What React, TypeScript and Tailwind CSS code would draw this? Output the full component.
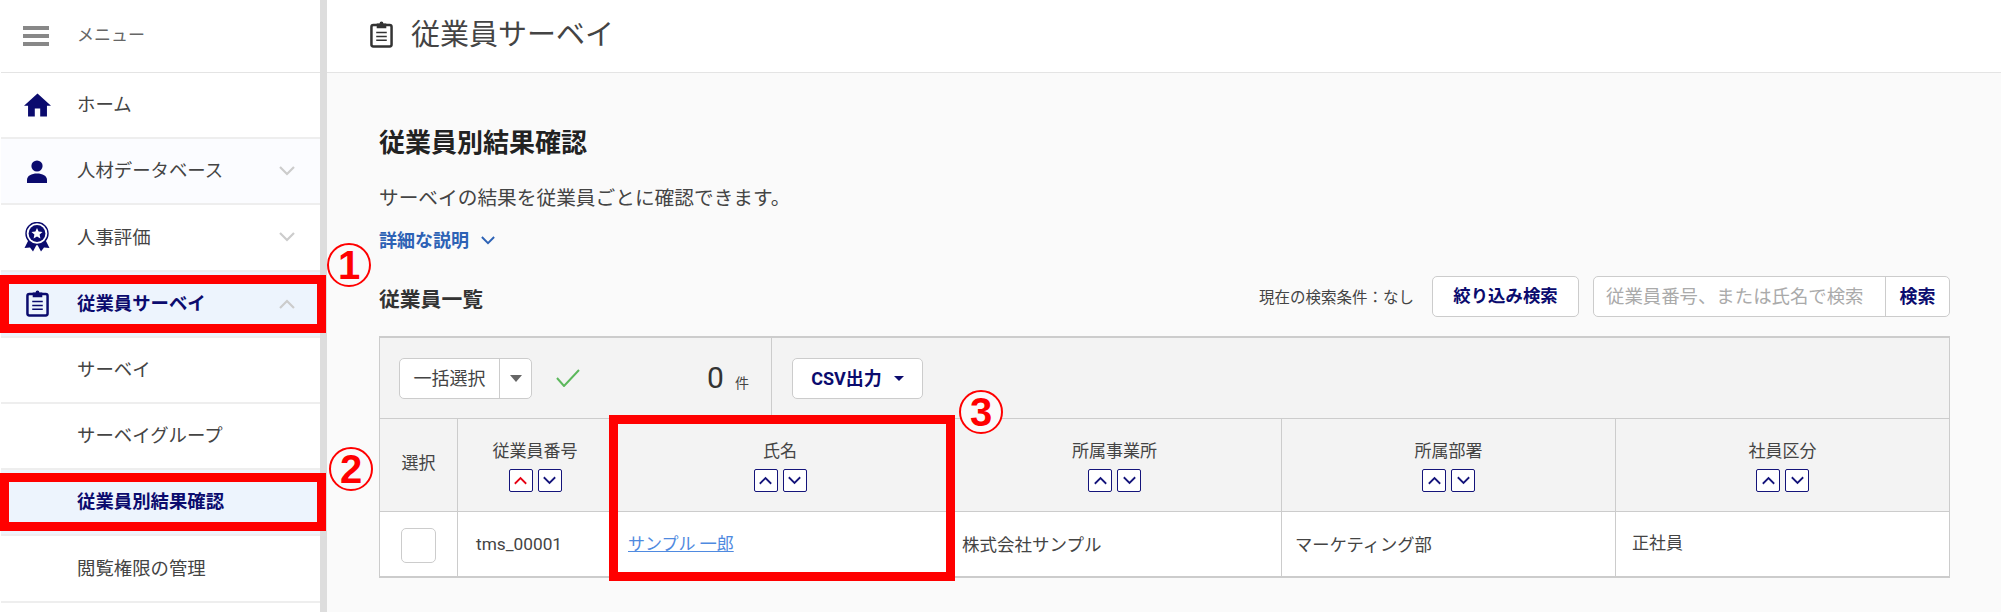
const Chevron = ({ up = false, className = "" }: { up?: boolean; className?: string }) => (
  <svg viewBox="0 0 16 10" className={className} fill="none" stroke="currentColor" strokeWidth={2.2}>
    <path d={up ? "M1 9 L8 2 L15 9" : "M1 1 L8 8 L15 1"} />
  </svg>
);

const Clipboard = ({ color }: { color: string }) => (
  <svg viewBox="0 0 24 28" className="w-[23px] h-[27px]" fill="none">
    <rect x="1.5" y="4" width="21" height="22.5" rx="2" stroke={color} strokeWidth="2.6" />
    <path d="M7 2.5h3a2 2 0 0 1 4 0h3v5H7z" fill={color} />
    <path d="M6.5 12h11M6.5 16h11M6.5 20h11" stroke={color} strokeWidth="1.6" />
  </svg>
);

const Home = () => (
  <svg viewBox="2 3 20 17" className="w-[27px] h-[24px]" fill="#0b0b6e">
    <path d="M10 20v-6h4v6h5v-8h3L12 3 2 12h3v8z" />
  </svg>
);

const Person = () => (
  <svg viewBox="0 0 20 23" className="w-[20px] h-[23px]" fill="#0b0b6e">
    <circle cx="10" cy="6" r="5.6" />
    <path d="M0 23v-3c0-4.2 4.5-6.5 10-6.5S20 15.8 20 20v3z" />
  </svg>
);

const Badge = () => (
  <svg viewBox="0 0 26 30" className="w-[26px] h-[30px]">
    <path d="M5 17 L0.5 26 L6 25.5 L9 29.5 L13 22 L17 29.5 L20 25.5 L25.5 26 L21 17z" fill="#0b0b6e" />
    <circle cx="13" cy="11.5" r="11" fill="#fff" stroke="#0b0b6e" strokeWidth="1.4" />
    <circle cx="13" cy="11.5" r="8.4" fill="#0b0b6e" />
    <path d="M13 6l1.6 3.6 3.9.4-2.9 2.6.8 3.9-3.4-2-3.4 2 .8-3.9L7.5 10l3.9-.4z" fill="#fff" />
  </svg>
);

const Row = ({
  icon,
  label,
  chevron,
  active,
  tint,
}: {
  icon?: React.ReactNode;
  label: string;
  chevron?: "up" | "down";
  active?: boolean;
  tint?: boolean;
}) => (
  <div
    className={`h-[66.2px] flex items-center border-b-2 border-[#eeeeee] text-[18.4px] ${
      active ? "bg-[#edf4fd] text-[#0b0b6e] font-bold" : tint ? "bg-[#fbfcff] text-[#444444]" : "bg-white text-[#444444]"
    }`}
  >
    <div className="w-[76px] flex justify-center pr-[4px] shrink-0">{icon}</div>
    <span className="flex-1">{label}</span>
    {chevron && <Chevron up={chevron === "up"} className="w-[16px] h-[10px] text-[#cccccc] mr-[25px]" />}
  </div>
);

const Sort = ({ redUp = false }: { redUp?: boolean }) => (
  <div className="flex justify-center gap-[5px] mt-[6px]">
    <div className="w-[24px] h-[23px] bg-white border border-[#14147a] rounded-[2px] flex items-center justify-center">
      <Chevron up className={`w-[13px] h-[9px] ${redUp ? "text-[#e60012]" : "text-[#14147a]"}`} />
    </div>
    <div className="w-[24px] h-[23px] bg-white border border-[#14147a] rounded-[2px] flex items-center justify-center">
      <Chevron className="w-[13px] h-[9px] text-[#14147a]" />
    </div>
  </div>
);

const Head = ({ label, redUp }: { label: string; redUp?: boolean }) => (
  <div className="border-r border-[#cccccc] last:border-r-0 flex flex-col justify-start items-center pt-[20px] text-[17px] leading-[24px] text-[#444444]">
    <span>{label}</span>
    <Sort redUp={redUp} />
  </div>
);

const Ring = ({ n, className }: { n: string; className: string }) => (
  <div
    className={`absolute w-[44px] h-[44px] rounded-full border-2 border-[#ff0000] bg-[#fafafa] flex items-center justify-center text-[40px] font-bold text-[#ff0000] font-['Liberation_Sans'] leading-none ${className}`}
  >
    {n}
  </div>
);

export default function App() {
  return (
    <div className="relative w-[2001px] h-[612px] overflow-hidden flex bg-[#fafafa] font-['Roboto','Noto_Sans_CJK_JP',sans-serif]">
      <aside className="w-[327px] h-[612px] shrink-0 bg-white pl-px border-r-[7px] border-[#dddddd]">
        <div className="h-[73px] flex items-center border-b border-[#e4e4e4] text-[17px] text-[#666666]">
          <div className="w-[76px] flex justify-center pr-[6px] shrink-0">
            <div className="w-[26px] flex flex-col gap-[4px]">
              <div className="h-[4px] bg-[#888888]" />
              <div className="h-[4px] bg-[#888888]" />
              <div className="h-[4px] bg-[#888888]" />
            </div>
          </div>
          <span>メニュー</span>
        </div>
        <Row icon={<Home />} label="ホーム" />
        <Row icon={<Person />} label="人材データベース" chevron="down" tint />
        <Row icon={<Badge />} label="人事評価" chevron="down" />
        <Row icon={<Clipboard color="#0b0b6e" />} label="従業員サーベイ" chevron="up" active />
        <Row label="サーベイ" />
        <Row label="サーベイグループ" />
        <Row label="従業員別結果確認" active />
        <Row label="閲覧権限の管理" />
      </aside>

      <main className="flex-1 min-w-0">
        <header className="h-[73px] bg-white border-b border-[#e4e4e4] flex items-center pl-[43px] gap-[18px]">
          <div className="pb-[3px]">
            <Clipboard color="#333333" />
          </div>
          <h1 className="text-[29px] font-normal text-[#444444]">従業員サーベイ</h1>
        </header>

        <div className="pl-[52px] pr-[51px]">
          <h2 className="mt-[50px] h-[40px] leading-[40px] text-[26px] font-bold text-[#222222]">従業員別結果確認</h2>
          <p className="mt-[21px] h-[30px] leading-[30px] text-[19.7px] text-[#444444]">サーベイの結果を従業員ごとに確認できます。</p>
          <div className="mt-[14px] h-[24px] flex items-center gap-[12px] text-[18px] font-bold text-[#2d62b5]">
            <span>詳細な説明</span>
            <Chevron className="w-[14px] h-[9px]" />
          </div>

          <div className="mt-[24px] h-[41px] flex items-center">
            <h3 className="flex-1 text-[20.8px] font-bold text-[#333333] pt-[8px]">従業員一覧</h3>
            <span className="text-[15.5px] text-[#444444] mr-[18px] pt-[5px]">現在の検索条件：なし</span>
            <button className="w-[147px] h-[41px] bg-white border border-[#cccccc] rounded-[5px] text-[17.4px] font-bold text-[#0b0b6e] mr-[14px]">
              絞り込み検索
            </button>
            <div className="w-[357px] h-[41px] flex bg-white border border-[#cccccc] rounded-[5px]">
              <span className="flex-1 flex items-center pl-[12px] text-[18.4px] text-[#aaaaaa]">従業員番号、または氏名で検索</span>
              <span className="w-[64px] border-l border-[#cccccc] flex items-center justify-center text-[18px] font-bold text-[#0b0b6e]">検索</span>
            </div>
          </div>

          <div className="mt-[19px] border border-[#cccccc] border-t-2 border-b-2">
            <div className="h-[81px] bg-[#f3f3f3] flex border-b border-[#cccccc]">
              <div className="w-[392px] border-r border-[#cccccc] flex items-center pl-[19px]">
                <div className="w-[133px] h-[41px] bg-white border border-[#cccccc] rounded-[5px] flex text-[18px] text-[#444444]">
                  <span className="w-[100px] border-r border-[#cccccc] flex items-center justify-center">一括選択</span>
                  <span className="flex-1 flex items-center justify-center">
                    <span className="w-0 h-0 border-x-[6px] border-x-transparent border-t-[7px] border-t-[#666666]" />
                  </span>
                </div>
                <svg viewBox="0 0 24 18" className="w-[24px] h-[18px] ml-[24px]" fill="none" stroke="#5cb85c" strokeWidth="2">
                  <path d="M1 9 L8 17 L23 1" />
                </svg>
                <span className="ml-[127px] text-[30px] leading-none text-[#333333]">0</span>
                <span className="ml-[11px] text-[14px] text-[#444444] pt-[10px]">件</span>
              </div>
              <div className="flex items-center pl-[20px]">
                <button className="w-[131px] h-[41px] bg-white border border-[#cccccc] rounded-[5px] flex items-center justify-center gap-[12px] text-[18px] font-bold text-[#0b0b6e]">
                  <span>CSV出力</span>
                  <span className="w-0 h-0 border-x-[5px] border-x-transparent border-t-[5px] border-t-[#0b0b6e]" />
                </button>
              </div>
            </div>

            <div className="h-[93px] bg-[#f3f3f3] grid grid-cols-[78px_155px_335px_334px_334px_1fr] border-b border-[#cccccc]">
              <div className="border-r border-[#cccccc] flex items-center justify-center text-[17px] text-[#444444] pb-[2px]">選択</div>
              <Head label="従業員番号" redUp />
              <Head label="氏名" />
              <Head label="所属事業所" />
              <Head label="所属部署" />
              <Head label="社員区分" />
            </div>

            <div className="h-[64px] bg-white grid grid-cols-[78px_155px_335px_334px_334px_1fr] text-[#444444]">
              <div className="border-r border-[#cccccc] flex items-center justify-center pt-[3px]">
                <div className="w-[35px] h-[35px] border border-[#cccccc] rounded-[5px]" />
              </div>
              <div className="border-r border-[#cccccc] flex items-center pl-[18px] text-[17.3px] pt-[2px]">tms_00001</div>
              <div className="border-r border-[#cccccc] flex items-center pl-[15px] text-[17px] pt-[1px]">
                <a className="text-[#4f8ae0] underline">サンプル 一郎</a>
              </div>
              <div className="border-r border-[#cccccc] flex items-center pl-[14px] text-[17.5px] pt-[3px]">株式会社サンプル</div>
              <div className="border-r border-[#cccccc] flex items-center pl-[13px] text-[17.3px] pt-[3px]">マーケティング部</div>
              <div className="flex items-center pl-[16px] text-[17px] pb-[1px]">正社員</div>
            </div>
          </div>
        </div>
      </main>

      <div className="absolute left-0 top-[275px] w-[326px] h-[58px] border-[9px] border-[#ff0000]" />
      <div className="absolute left-0 top-[473px] w-[326px] h-[58px] border-[9px] border-[#ff0000]" />
      <div className="absolute left-[609px] top-[415px] w-[346px] h-[166px] border-[9px] border-[#ff0000]" />
      <Ring n="1" className="left-[327px] top-[243px]" />
      <Ring n="2" className="left-[329px] top-[447px]" />
      <Ring n="3" className="left-[959px] top-[390px]" />
    </div>
  );
}
